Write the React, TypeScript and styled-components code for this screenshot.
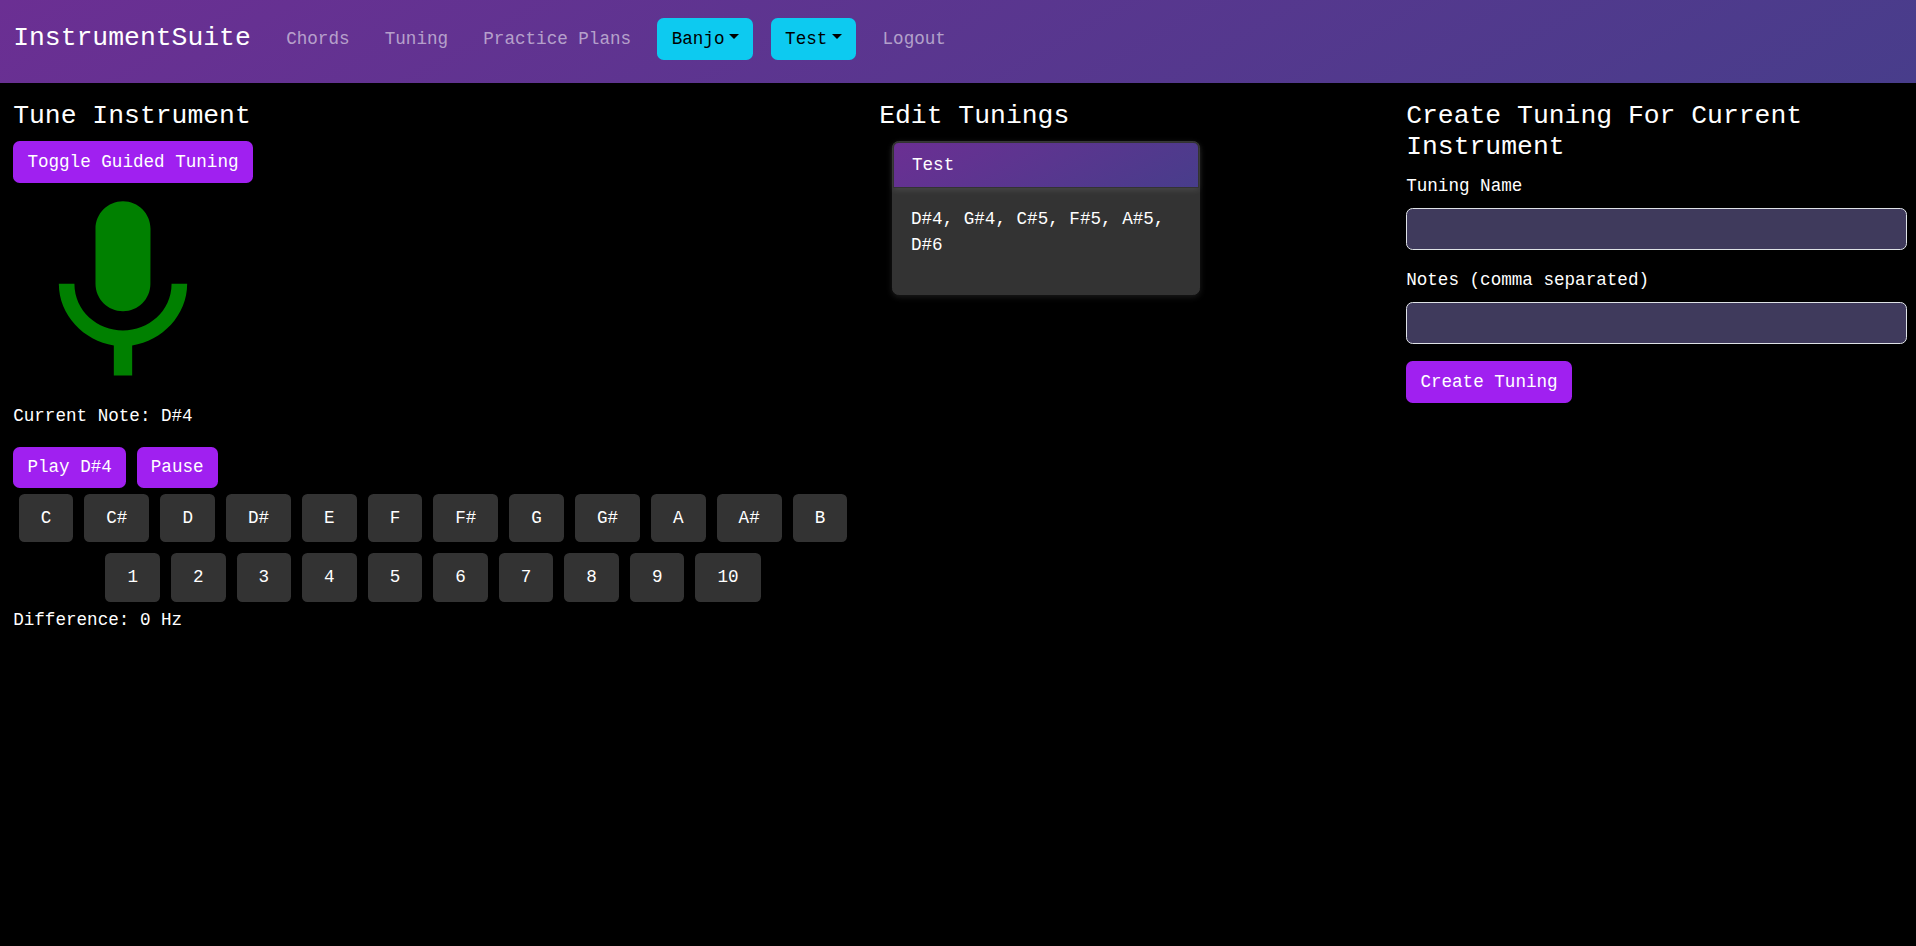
import React from "react";
import styled, { createGlobalStyle } from "styled-components";

const GlobalStyle = createGlobalStyle`
  *, *::before, *::after { box-sizing: border-box; }
  html { font-size: 17.6px; }
  body {
    margin: 0;
    min-height: 100vh;
    overflow: hidden;
    background: #000;
    color: #fff;
    font-family: "Liberation Mono", monospace;
    font-size: 1rem;
    line-height: 1.5;
  }
  button, input { font: inherit; }
`;

const gradient = "linear-gradient(150deg, #6b2f93, #483d8b)";
const glow = "0 2px 6px rgba(255, 255, 255, 0.11)";

const Navbar = styled.nav`
  display: flex;
  align-items: flex-start;
  height: 83px;
  padding: 17px 0.75rem 0;
  background: ${gradient};
`;

const Brand = styled.a`
  margin-right: 17.85px;
  padding-top: 2.4px;
  font-size: 1.5rem;
  line-height: 1.5;
`;

const NavList = styled.ul`
  display: flex;
  align-items: center;
  height: 44px;
  margin: 0;
  padding: 0;
  list-style: none;
`;

const NavItem = styled.li`
  margin: 0 0.5rem;
`;

const NavLink = styled.a`
  display: block;
  padding: 0.5rem;
  color: rgba(255, 255, 255, 0.55);
`;

const Button = styled.button<{ $tone?: "info" }>`
  display: block;
  padding: 0.375rem 0.75rem;
  border: 1px solid transparent;
  border-radius: 0.375rem;
  background: ${(p) => (p.$tone === "info" ? "#0dcaf0" : "#a020f0")};
  color: ${(p) => (p.$tone === "info" ? "#000" : "#fff")};
  line-height: 1.5;
  white-space: nowrap;
`;

const Caret = styled.span`
  display: inline-block;
  margin-left: 0.265em;
  vertical-align: 0.255em;
  border-top: 0.3em solid;
  border-right: 0.3em solid transparent;
  border-left: 0.3em solid transparent;
`;

const Columns = styled.main`
  display: grid;
  grid-template-columns: 866px 527px 1fr;
  padding-top: 1rem;
`;

const Column = styled.section`
  padding: 0 0.75rem;

  &:last-child {
    padding-right: 9.5px;
  }
`;

const Heading = styled.h4`
  margin: 0 0 0.5rem;
  font-size: 1.5rem;
  font-weight: 400;
  line-height: 1.2;
`;

const MicIcon = styled.svg`
  display: block;
  width: 220px;
  height: 220px;
  fill: #008000;
`;

const Text = styled.p<{ $flush?: boolean }>`
  margin: 0 0 ${(p) => (p.$flush ? "0" : "1rem")};
`;

const ButtonRow = styled.div`
  display: flex;
  gap: 0.6rem;
`;

const KeyRow = styled.div`
  display: flex;
  justify-content: center;
  gap: 11px;
  padding: 5.5px 0;
`;

const Key = styled.div`
  flex: none;
  padding: 11px 22px;
  border-radius: 5.5px;
  background: #333;
`;

const Card = styled.article`
  width: 308px;
  margin-left: 13.2px;
  border: 1px solid #333;
  border-radius: 0.375rem;
  background: #333;
  box-shadow: ${glow};
`;

const CardHeader = styled.header`
  padding: 0.5rem 1rem;
  border: 1px solid #333;
  border-radius: 5.6px 5.6px 0 0;
  background: ${gradient};
  box-shadow: ${glow};
`;

const CardBody = styled.div`
  padding: 1rem;
`;

const Field = styled.label`
  display: block;
  margin-bottom: 17.3px;
`;

const Input = styled.input`
  display: block;
  width: 100%;
  height: 41.6px;
  margin-top: 0.5rem;
  padding: 0.375rem 0.75rem;
  border: 1px solid #dee2e6;
  border-radius: 0.375rem;
  background: #3f3a5c;
  color: #fff;
`;

const notes = ["C", "C#", "D", "D#", "E", "F", "F#", "G", "G#", "A", "A#", "B"];
const octaves = [1, 2, 3, 4, 5, 6, 7, 8, 9, 10];

export default function App() {
  return (
    <>
      <GlobalStyle />
      <Navbar>
        <Brand>InstrumentSuite</Brand>
        <NavList>
          {["Chords", "Tuning", "Practice Plans"].map((label) => (
            <NavItem key={label}>
              <NavLink>{label}</NavLink>
            </NavItem>
          ))}
          {["Banjo", "Test"].map((label) => (
            <NavItem key={label}>
              <Button $tone="info">
                {label}
                <Caret />
              </Button>
            </NavItem>
          ))}
          <NavItem>
            <NavLink>Logout</NavLink>
          </NavItem>
        </NavList>
      </Navbar>
      <Columns>
        <Column>
          <Heading>Tune Instrument</Heading>
          <Button>Toggle Guided Tuning</Button>
          <MicIcon viewBox="0 0 24 24">
            <path d="M12 14c1.66 0 2.99-1.34 2.99-3L15 5c0-1.66-1.34-3-3-3S9 3.34 9 5v6c0 1.66 1.34 3 3 3zm5.3-3c0 3-2.54 5.1-5.3 5.1S6.7 14 6.7 11H5c0 3.41 2.72 6.23 6 6.72V21h2v-3.28c3.28-.48 6-3.3 6-6.72h-1.7z" />
          </MicIcon>
          <Text>Current Note: D#4</Text>
          <ButtonRow>
            <Button>Play D#4</Button>
            <Button>Pause</Button>
          </ButtonRow>
          <KeyRow>
            {notes.map((note) => (
              <Key key={note}>{note}</Key>
            ))}
          </KeyRow>
          <KeyRow>
            {octaves.map((octave) => (
              <Key key={octave}>{octave}</Key>
            ))}
          </KeyRow>
          <Text $flush>Difference: 0 Hz</Text>
        </Column>
        <Column>
          <Heading>Edit Tunings</Heading>
          <Card>
            <CardHeader>Test</CardHeader>
            <CardBody>
              <Text>D#4, G#4, C#5, F#5, A#5, D#6</Text>
            </CardBody>
          </Card>
        </Column>
        <Column>
          <Heading>Create Tuning For Current Instrument</Heading>
          <Field>
            Tuning Name
            <Input />
          </Field>
          <Field>
            Notes (comma separated)
            <Input />
          </Field>
          <Button>Create Tuning</Button>
        </Column>
      </Columns>
    </>
  );
}
